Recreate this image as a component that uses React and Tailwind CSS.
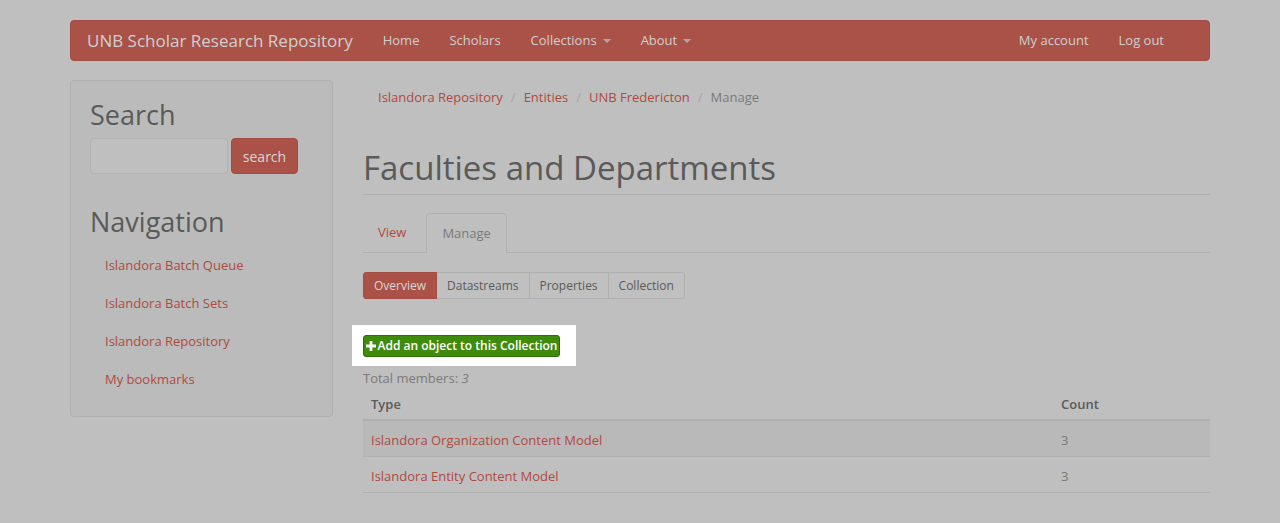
import { useState } from "react";

const navLinks = ["Islandora Batch Queue", "Islandora Batch Sets", "Islandora Repository", "My bookmarks"];

const models = [
  { name: "Islandora Organization Content Model", count: 3 },
  { name: "Islandora Entity Content Model", count: 3 },
];

const Caret = () => (
  <span className="ml-1.5 inline-block border-x-[4px] border-t-[4px] border-x-transparent border-t-[#a9a9a9] align-middle"></span>
);

const App = () => {
  const [query, setQuery] = useState("");

  return (
    <div className="min-h-[523px] bg-[#bfbfbf] font-['Open_Sans',sans-serif] text-[13px] text-[#5a5a5a]">
      <div className="mx-auto w-[1140px] pt-5">
        {/* top bar */}
        <div className="flex h-[41px] items-center rounded-[4px] border border-[#a24c43] bg-[#ab5248] pt-px text-[#cfcfcf]">
          <span className="pl-[16px] pr-[15px] text-[17px]">UNB Scholar Research Repository</span>
          <span className="px-[15px]">Home</span>
          <span className="px-[15px]">Scholars</span>
          <span className="flex items-center px-[15px]">Collections<Caret /></span>
          <span className="flex items-center px-[15px]">About<Caret /></span>
          <div className="ml-auto flex pr-[30px]">
            <span className="px-[15px]">My account</span>
            <span className="px-[15px]">Log out</span>
          </div>
        </div>

        <div className="mt-[19px] flex gap-[30px]">
          {/* sidebar */}
          <div className="h-[337px] w-[263px] shrink-0 rounded-[4px] border border-[#b0b0b0] bg-[#bbbbbb] px-[19px] pt-[17px]">
            <h2 className="text-[27px] leading-[34px]">Search</h2>
            <div className="mt-[6px] flex gap-[3px]">
              <input
                value={query}
                onChange={(e) => setQuery(e.target.value)}
                className="h-[36px] w-[138px] rounded-[4px] border border-[#b3b3b3] bg-[#bfbfbf] outline-none"
              />
              <button className="h-[36px] w-[67px] rounded-[4px] border border-[#a24c43] bg-[#ab5248] text-[14px] text-[#d6d6d6]">
                search
              </button>
            </div>
            <h2 className="mt-[31px] text-[27px] leading-[34px]">Navigation</h2>
            <ul className="mt-[16px] pl-[15px]">
              {navLinks.map((l) => (
                <li key={l} className="h-[38px] leading-[20px] text-[#b04a3e]">{l}</li>
              ))}
            </ul>
          </div>

          {/* main */}
          <div className="flex-1">
            <div className="flex h-[36px] items-center gap-[8px] pl-[15px] text-[#b04a3e]">
              <span>Islandora Repository</span>
              <span className="text-[#a3a3a3]">/</span>
              <span>Entities</span>
              <span className="text-[#a3a3a3]">/</span>
              <span>UNB Fredericton</span>
              <span className="text-[#a3a3a3]">/</span>
              <span className="text-[#7a7a7a]">Manage</span>
            </div>

            <h1 className="mt-[32px] border-b border-[#b0b0b0] pb-[6px] text-[33px] leading-[40px]">
              Faculties and Departments
            </h1>

            <div className="mt-[18px] flex h-[40px] items-end border-b border-[#b0b0b0]">
              <span className="mr-[5px] flex h-[39px] items-center px-[15px] text-[#b04a3e]">View</span>
              <span className="-mb-px flex h-[40px] items-center rounded-t-[4px] border border-b-0 border-[#b0b0b0] bg-[#bfbfbf] px-[15px] text-[#7a7a7a]">
                Manage
              </span>
            </div>

            <div className="mt-[19px] flex h-[27px] w-fit text-[12px]">
              <span className="flex items-center rounded-l-[3px] border border-[#a24c43] bg-[#ab5248] px-[10px] text-[#d6d6d6]">Overview</span>
              <span className="flex items-center border border-l-0 border-[#b0b0b0] bg-[#c0c0c0] px-[10px]">Datastreams</span>
              <span className="flex items-center border border-l-0 border-[#b0b0b0] bg-[#c0c0c0] px-[10px]">Properties</span>
              <span className="flex items-center rounded-r-[3px] border border-l-0 border-[#b0b0b0] bg-[#c0c0c0] px-[10px]">Collection</span>
            </div>

            <div className="-ml-[11px] mt-[26px] flex h-[41px] w-[224px] items-center bg-white pl-[11px]">
              <button className="flex h-[22px] w-[197px] items-center justify-center gap-[2px] whitespace-nowrap rounded-[3px] border border-[#2f6d07] bg-[#3f8b0b] text-[12px] font-semibold text-white">
                <svg width="10" height="10" viewBox="0 0 10 10">
                  <path d="M3.6 0h2.8v3.6H10v2.8H6.4V10H3.6V6.4H0V3.6h3.6z" fill="white" />
                </svg>
                Add an object to this Collection
              </button>
            </div>

            <p className="mt-[2px] leading-[20px] text-[#7a7a7a]">
              Total members: <em>3</em>
            </p>

            <div className="grid grid-cols-[690px_1fr] text-[13px]">
              <div className="border-b-2 border-[#b0b0b0] px-[8px] pb-[5px] pt-[6px] leading-[20px] font-semibold">Type</div>
              <div className="border-b-2 border-[#b0b0b0] px-[8px] pb-[5px] pt-[6px] leading-[20px] font-semibold">Count</div>
              {models.map((m, i) => (
                <div key={m.name} className="contents">
                  <div className={`h-[36px] border-b border-[#b0b0b0] px-[8px] pt-[9px] leading-[20px] text-[#b04a3e] ${i === 0 ? "bg-[#b9b9b9]" : ""}`}>
                    {m.name}
                  </div>
                  <div className={`h-[36px] border-b border-[#b0b0b0] px-[8px] pt-[9px] leading-[20px] text-[#7a7a7a] ${i === 0 ? "bg-[#b9b9b9]" : ""}`}>
                    {m.count}
                  </div>
                </div>
              ))}
            </div>
          </div>
        </div>
      </div>
    </div>
  );
};

export default App;
